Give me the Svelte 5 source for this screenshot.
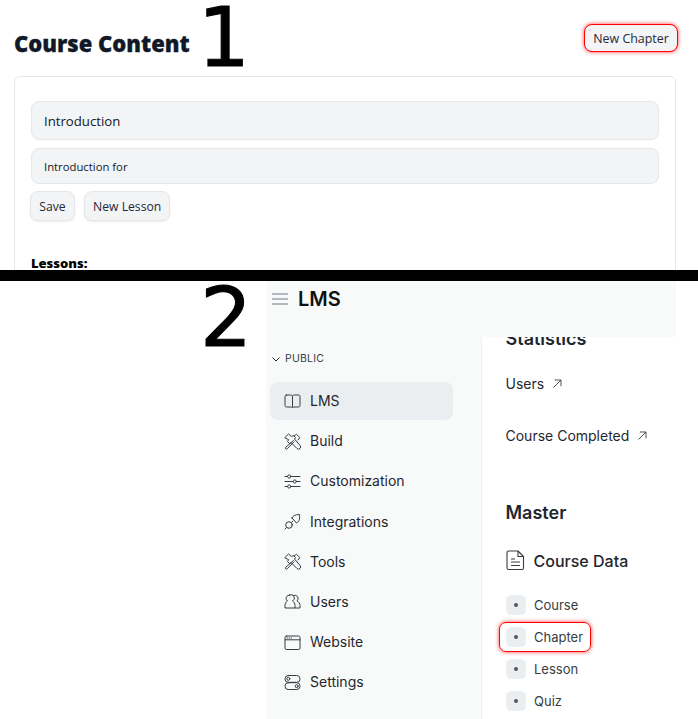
<script>
	const navItems = [
		{ label: 'LMS', icon: 'book', active: true },
		{ label: 'Build', icon: 'hammer' },
		{ label: 'Customization', icon: 'sliders' },
		{ label: 'Integrations', icon: 'plug' },
		{ label: 'Tools', icon: 'hammer' },
		{ label: 'Users', icon: 'users' },
		{ label: 'Website', icon: 'web' },
		{ label: 'Settings', icon: 'settings' }
	];
	const links = [
		{ label: 'Course' },
		{ label: 'Chapter', marked: true },
		{ label: 'Lesson' },
		{ label: 'Quiz' }
	];
</script>

<div class="page">
	<section class="top">
		<header class="top-head">
			<h1>Course Content</h1>
			<span class="step step-one">1</span>
			<button class="btn new-chapter">New Chapter</button>
		</header>
		<div class="card">
			<div class="field field-title">Introduction</div>
			<div class="field field-desc">Introduction for</div>
			<div class="actions">
				<button class="btn btn-save">Save</button>
				<button class="btn">New Lesson</button>
			</div>
			<div class="lessons">Lessons:</div>
		</div>
	</section>

	<div class="divider"></div>

	<section class="bottom">
		<div class="step-col"><span class="step">2</span></div>
		<div class="desk">
			<div class="topbar">
				<svg class="burger" width="16" height="12" viewBox="0 0 16 12" fill="none" stroke="#9ca3af" stroke-width="1.5">
					<path d="M0 1h16M0 6h16M0 11h16" />
				</svg>
				<span class="brand">LMS</span>
			</div>
			<div class="body">
				<aside class="sidebar">
					<div class="group">
						<svg width="10" height="10" viewBox="0 0 10 10" fill="none" stroke="#1f272e" stroke-width="1">
							<path d="M1.500 3.500 5 7l3.500-3.500" />
						</svg>
						<span>PUBLIC</span>
					</div>
					<nav>
						{#each navItems as item}
							<div class="nav-item" class:active={item.active}>
								<svg width="17" height="17" viewBox="0 0 17 17" fill="none" stroke="#383d42" stroke-width="1" stroke-linecap="round" stroke-linejoin="round">
									{#if item.icon === 'book'}
										<path d="M2.500 2h4c1 0 1.600.4 2 1 .4-.6 1-1 2-1h4A1.500 1.500 0 0 1 16 3.500v9a1.500 1.500 0 0 1-1.500 1.500h-5l-1 1-1-1h-5A1.500 1.500 0 0 1 1 12.500v-9A1.500 1.500 0 0 1 2.500 2Z" />
										<path d="M8.500 3v10.500" />
									{:else if item.icon === 'hammer'}
										<path d="M1 4.500 4.500 1l3 2.500 2-1 2 2-1 1.500L16 12.500a1.600 1.600 0 0 1-3 3L7 9.500 5.500 10.500 3.500 8.500l1-1.500Z" />
										<path d="m9.500 7.500-7.800 6.800a1 1 0 0 0 1.500 1.500l6.800-7" />
										<path d="M10 3l2.500-1.800 3.300 3.300L14 7" />
									{:else if item.icon === 'sliders'}
										<path d="M1 3.500h2.500M7 3.500h9M1 8.500h8M12.500 8.500H16M1 13.500h2.500M7 13.500h9" />
										<circle cx="5.200" cy="3.500" r="1.600" />
										<circle cx="10.800" cy="8.500" r="1.600" />
										<circle cx="5.200" cy="13.500" r="1.600" />
									{:else if item.icon === 'plug'}
										<path d="M8 5l4.500 5c2.500-1 3.500-3.500 3-8.500-4.500 0-7 1.500-7.500 3.500Z" />
										<circle cx="5" cy="12" r="3.300" />
										<path d="M2.500 14.500 1 16M7.500 9.500l1.500-1.500" />
									{:else if item.icon === 'users'}
										<path d="M5.500 2a3.300 3.300 0 0 0-2 6c-1.500.8-2.500 2.500-2.500 4.500v2.500h10v-2.500c0-2-1-3.700-2.500-4.500a3.300 3.300 0 0 0-3-6Z" />
										<path d="M9.500 2.500a3.300 3.300 0 0 1 3.500 5.500c1.800.8 3 2.500 3 4.500v2.500h-5" />
									{:else if item.icon === 'web'}
										<rect x="1" y="2" width="15" height="13.500" rx="1.500" />
										<path d="M1 5.800h15" />
										<path d="M3 4h.5M5 4h.5M7 4h.5" />
									{:else}
										<rect x="1" y="1.500" width="15" height="6.800" rx="3.200" />
										<rect x="1" y="8.700" width="15" height="6.800" rx="3.200" />
										<circle cx="4.300" cy="4.800" r="1.500" />
										<circle cx="12.700" cy="12.200" r="1.500" />
									{/if}
								</svg>
								<span>{item.label}</span>
							</div>
						{/each}
					</nav>
				</aside>
				<main class="main">
					<h2 class="clipped">Statistics</h2>
					<div class="stat">
						<span>Users</span>
						<svg width="9" height="9" viewBox="0 0 9 9" fill="none" stroke="#383d42" stroke-width="0.900">
							<path d="M.500 8.500 8 1M1.800 1H8v6.200" />
						</svg>
					</div>
					<div class="stat">
						<span>Course Completed</span>
						<svg width="9" height="9" viewBox="0 0 9 9" fill="none" stroke="#383d42" stroke-width="0.900">
							<path d="M.500 8.500 8 1M1.800 1H8v6.200" />
						</svg>
					</div>
					<h2 class="master">Master</h2>
					<div class="section-head">
						<svg width="19" height="21" viewBox="0 0 19 21" fill="none" stroke="#383d42" stroke-width="1.100" stroke-linejoin="round">
							<path d="M2.500 1H12l5.500 5.500V18a1.500 1.500 0 0 1-1.500 1.500H2.500A1.500 1.500 0 0 1 1 18V2.500A1.500 1.500 0 0 1 2.500 1Z" />
							<path d="M12 1v5.500h5.500M5 9h4M5 12h9M5 15.500h9" />
						</svg>
						<span>Course Data</span>
					</div>
					<div class="links">
						{#each links as link}
							<div class="link" class:marked={link.marked}>
								<span class="dot-box"><span class="dot"></span></span>
								<span>{link.label}</span>
							</div>
						{/each}
					</div>
				</main>
			</div>
		</div>
	</section>
</div>

<style>
	:global(body) {
		margin: 0;
		background: #fff;
	}

	.page {
		width: 698px;
		height: 719px;
		overflow: hidden;
		background: #fff;
	}

	.top {
		height: 270px;
		padding: 0 22px 0 14px;
		box-sizing: border-box;
		overflow: hidden;
		font-family: 'Open Sans', sans-serif;
		color: #111827;
	}

	.top-head {
		display: flex;
		height: 76px;
		align-items: flex-start;
	}

	h1 {
		margin: 28px 0 0;
		font-size: 22px;
		line-height: 30px;
		font-weight: 800;
		color: #111827;
		white-space: nowrap;
		-webkit-text-stroke: 0.3px #111827;
	}

	.step {
		font-family: 'DejaVu Sans', sans-serif;
		font-size: 82px;
		line-height: 74px;
		color: #000;
		-webkit-text-stroke: 1px #000;
	}

	.step-one {
		margin-left: 8px;
		margin-top: 1px;
	}

	.btn {
		height: 30px;
		padding: 1px 8px 0;
		background: #f3f4f6;
		border: 1px solid #e5e7eb;
		border-radius: 8px;
		box-shadow: 0 1px 2px rgba(0, 0, 0, 0.08);
		font-family: 'Open Sans', sans-serif;
		font-size: 12.200px;
		color: #1f2937;
	}

	.btn-save {
		width: 45px;
		padding-left: 0;
		padding-right: 0;
	}

	.new-chapter {
		margin: 24px -2px 0 auto;
		height: 28px;
		width: 94px;
		padding: 0;
		font-size: 12.400px;
		border: 1.500px solid #f00;
		box-shadow: 0 0 4px rgba(255, 0, 0, 0.75);
	}

	.card {
		height: 230px;
		padding: 24px 16px 0;
		border: 1px solid #e5e7eb;
		border-radius: 6px;
		box-sizing: border-box;
	}

	.field {
		display: flex;
		align-items: center;
		padding: 0 12px;
		background: #f3f4f6;
		border: 1px solid #e5e7eb;
		border-radius: 8px;
		box-sizing: border-box;
	}

	.field-title {
		height: 39px;
		font-size: 13.200px;
	}

	.field-desc {
		height: 36px;
		margin-top: 8px;
		font-size: 11.300px;
	}

	.actions {
		display: flex;
		gap: 9px;
		margin-top: 7px;
		margin-left: -1px;
	}

	.lessons {
		margin-top: 34px;
		font-size: 13px;
		line-height: 17px;
		font-weight: 800;
		color: #000;
	}

	.divider {
		height: 11px;
		background: #000;
	}

	.bottom {
		display: flex;
		height: 438px;
		font-family: Inter, sans-serif;
		color: #1f272e;
	}

	.step-col {
		width: 266px;
		flex: none;
		padding-left: 200px;
		box-sizing: border-box;
	}

	.desk {
		width: 410px;
		flex: none;
		display: flex;
		flex-direction: column;
	}

	.topbar {
		display: flex;
		align-items: center;
		gap: 10px;
		height: 56px;
		flex: none;
		padding: 0 0 20px 6px;
		box-sizing: border-box;
		background: #f8fafa;
		position: relative;
		z-index: 1;
	}

	.brand {
		font-size: 20px;
		font-weight: 600;
		color: #111;
	}

	.body {
		display: flex;
		flex: 1;
		min-height: 0;
	}

	.sidebar {
		width: 216px;
		flex: none;
		box-sizing: border-box;
		padding: 0 28px 0 4px;
		background: #f8fafa;
		border-right: 1px solid #eef0f1;
	}

	.group {
		display: flex;
		align-items: center;
		gap: 4px;
		height: 43px;
		margin-bottom: 2px;
		padding-left: 1px;
		font-size: 10.500px;
		letter-spacing: 0.2px;
		color: #383d42;
	}

	nav {
		display: flex;
		flex-direction: column;
		margin-top: -1px;
	}

	.nav-item {
		display: flex;
		align-items: center;
		gap: 9px;
		height: 38px;
		margin-bottom: 2.200px;
		padding-left: 14px;
		border-radius: 8px;
		font-size: 14px;
	}

	.nav-item span {
		margin-bottom: 1px;
	}

	.nav-item:first-child {
		margin-top: 1px;
	}

	.nav-item.active {
		background: #ebeef0;
	}

	.main {
		flex: 1;
		min-width: 0;
		overflow: hidden;
		padding-left: 23.500px;
		background: #fff;
	}

	h2 {
		margin: 0;
		font-size: 18px;
		line-height: 24px;
		font-weight: 600;
		color: #1f272e;
	}

	.clipped {
		margin-top: -10px;
	}

	.stat {
		display: flex;
		align-items: center;
		gap: 9px;
		height: 20px;
		margin-top: 22px;
		margin-bottom: -11px;
		font-size: 14px;
		color: #1f272e;
	}

	.stat + .stat {
		margin-top: 43px;
	}

	.master {
		margin-top: 67px;
	}

	.section-head {
		display: flex;
		align-items: center;
		gap: 9px;
		margin-top: 25px;
		font-size: 16px;
		font-weight: 500;
	}

	.links {
		display: flex;
		flex-direction: column;
		gap: 12px;
		margin-top: 24px;
	}

	.link {
		display: flex;
		align-items: center;
		gap: 8.500px;
		height: 20px;
		width: max-content;
		position: relative;
		font-size: 13px;
		color: #383d42;
	}

	.link.marked::after {
		content: '';
		position: absolute;
		inset: -5px -8px -5px -7px;
		border: 1.500px solid #f00;
		border-radius: 7px;
		box-shadow: 0 0 4px rgba(255, 0, 0, 0.75);
	}

	.dot-box {
		display: flex;
		align-items: center;
		justify-content: center;
		width: 20px;
		height: 20px;
		background: #ebeef0;
		border-radius: 5px;
	}

	.dot {
		width: 4px;
		height: 4px;
		border-radius: 50%;
		background: #4c5a67;
	}
</style>
